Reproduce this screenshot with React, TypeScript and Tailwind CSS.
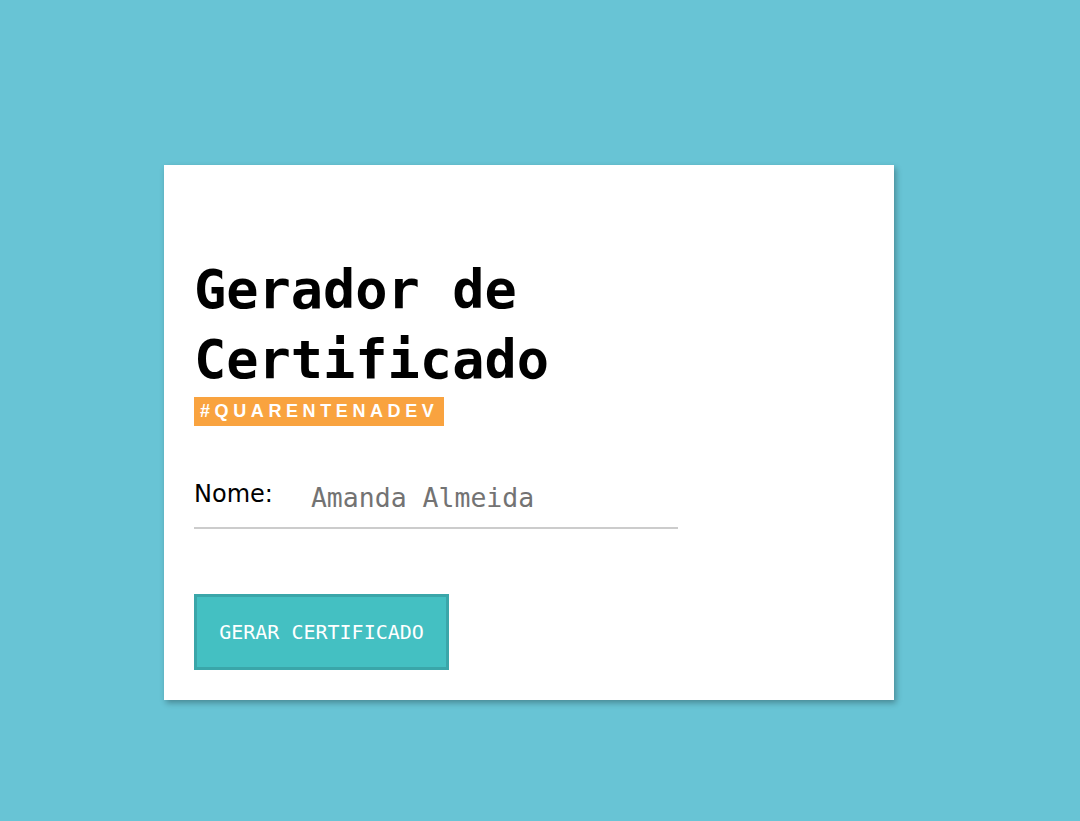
import React from "react";

export default function App() {
  return (
    <div className="w-[1080px] h-[821px] bg-[#68c4d5] relative overflow-hidden">
      <div className="absolute left-[164px] top-[165px] w-[730px] h-[535px] bg-white shadow-[2px_3px_6px_rgba(0,0,0,0.3)] pl-[30px] pt-[90px]">
        <h1
          className="text-[53.6px] leading-[70px] font-bold text-black"
          style={{ fontFamily: '"DejaVu Sans Mono", monospace' }}
        >
          Gerador de
          <br />
          Certificado
        </h1>
        <div className="mt-[2px] inline-block bg-[#f9a33f] h-[29px] px-[6px] text-white font-bold text-[18px] leading-[29px] tracking-[4.6px] font-['Liberation_Sans',Arial,sans-serif]">
          #QUARENTENADEV
        </div>
        <div className="mt-[54px] w-[484px] border-b-2 border-[#cccccc] flex items-end pb-[19px]">
          <span className="text-[24px] leading-[28px] text-black font-['DejaVu_Sans',sans-serif]">
            Nome:
          </span>
          <span
            className="ml-[38px] text-[26.5px] leading-[28px] text-[#737373] relative top-[4px]"
            style={{ fontFamily: '"DejaVu Sans Mono", monospace' }}
          >
            Amanda Almeida
          </span>
        </div>
        <button
          className="mt-[65px] w-[255px] h-[76px] bg-[#44c0c2] border-[3px] border-[#3aa6a9] text-white text-[20px] flex items-center justify-center"
          style={{ fontFamily: '"DejaVu Sans Mono", monospace' }}
        >
          GERAR CERTIFICADO
        </button>
      </div>
    </div>
  );
}
